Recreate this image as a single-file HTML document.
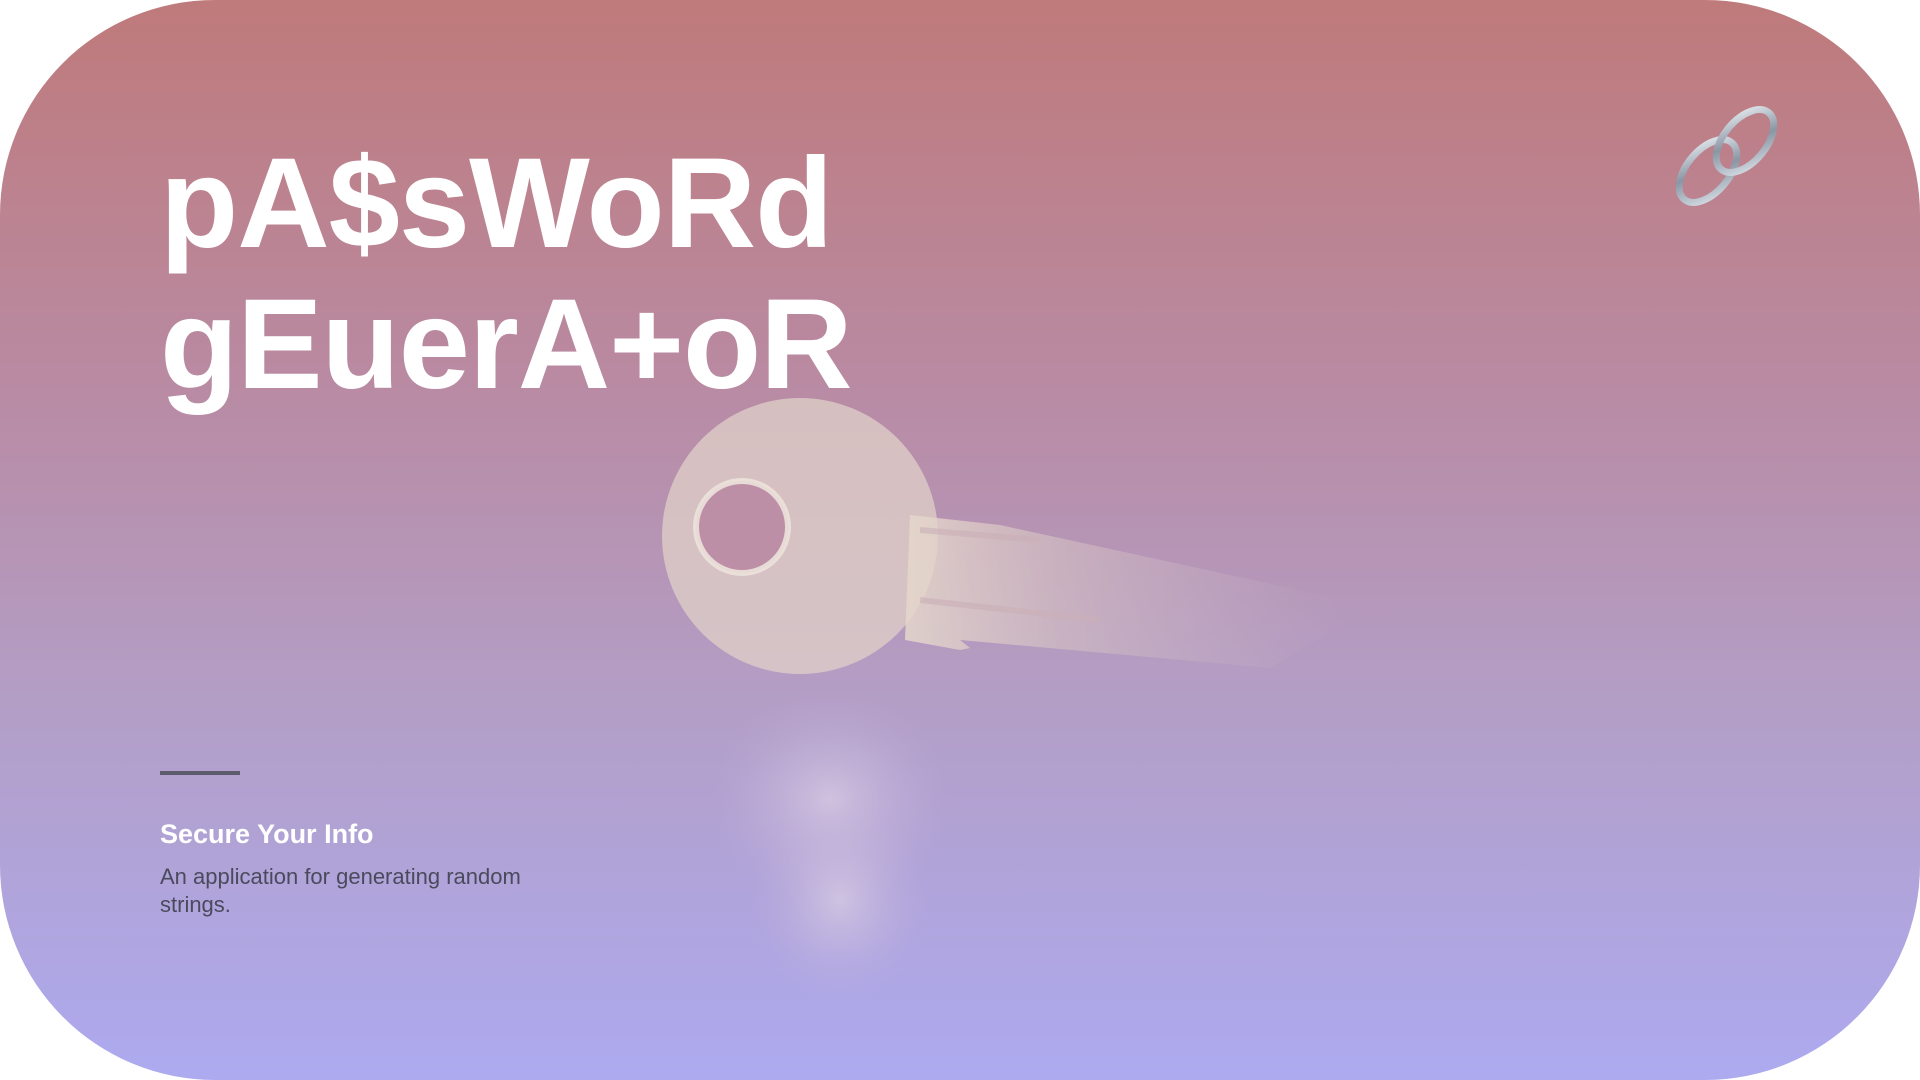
<!DOCTYPE html>
<html><head><meta charset="utf-8"><style>
html,body{margin:0;padding:0;width:1920px;height:1080px;background:#fff;overflow:hidden}
.card{position:absolute;left:0;top:0;width:1920px;height:1080px;border-radius:215px;overflow:hidden;
background:linear-gradient(180deg,#bf7a7b 0%,#b98aa2 35%,#b39ec6 65%,#adaaf0 100%);}
.t{position:absolute;left:160px;color:#fff;font-family:"Liberation Sans",sans-serif;font-weight:bold;font-size:128px;line-height:1;letter-spacing:-1px;margin:0}
.bar{position:absolute;left:160px;top:771px;width:80px;height:4px;background:#5d5b6c}
.h{position:absolute;left:160px;top:819px;color:#fff;font:bold 27px "Liberation Sans",sans-serif}
.p{position:absolute;left:160px;top:863px;width:400px;color:#4b4a5c;font:22px/28px "Liberation Sans",sans-serif}
</style></head><body>
<div class="card">
<svg width="1920" height="1080" style="position:absolute;left:0;top:0">
<defs>
<linearGradient id="k" x1="0" x2="1"><stop offset="0" stop-color="#e6d8cc" stop-opacity=".85"/><stop offset="0.35" stop-color="#d8c6c4" stop-opacity=".55"/><stop offset="1" stop-color="#c8b4c8" stop-opacity="0"/></linearGradient>
<radialGradient id="r"><stop offset="0" stop-color="#dcd0e4" stop-opacity=".7"/><stop offset="1" stop-color="#c0aed8" stop-opacity="0"/></radialGradient>
<linearGradient id="ring" x1="0" y1="0" x2="1" y2="1"><stop offset="0" stop-color="#eef2f6"/><stop offset=".5" stop-color="#8a96a4"/><stop offset="1" stop-color="#dfe6ec"/></linearGradient>
</defs>
<circle cx="800" cy="536" r="138" fill="#e0d0c8" opacity=".75"/>
<path d="M910 515 L1000 525 L1345 600 L1350 620 L1270 668 L960 640 L970 648 L960 650 L905 640 Z" fill="url(#k)"/>
<path d="M920 530 L1040 540 M920 600 L1100 620" stroke="#cbb0b8" stroke-width="6" opacity=".6"/>
<circle cx="742" cy="527" r="46" fill="#bd8fa6"/>
<circle cx="742" cy="527" r="46" fill="none" stroke="#ece2dc" stroke-width="6" opacity=".9"/>
<ellipse cx="830" cy="800" rx="120" ry="110" fill="url(#r)"/>
<ellipse cx="840" cy="900" rx="90" ry="100" fill="url(#r)"/>
<g fill="none" stroke="url(#ring)" stroke-width="7">
<ellipse cx="1708" cy="171" rx="21" ry="37" transform="rotate(40 1708 171)"/>
<ellipse cx="1745" cy="141" rx="21" ry="37" transform="rotate(40 1745 141)"/>
</g>
</svg>
<div class="t" style="top:140px">pA$sWoRd</div>
<div class="t" style="top:281px">gEuerA+oR</div>
<div class="bar"></div>
<div class="h">Secure Your Info</div>
<div class="p">An application for generating random strings.</div>
</div>
</body></html>
